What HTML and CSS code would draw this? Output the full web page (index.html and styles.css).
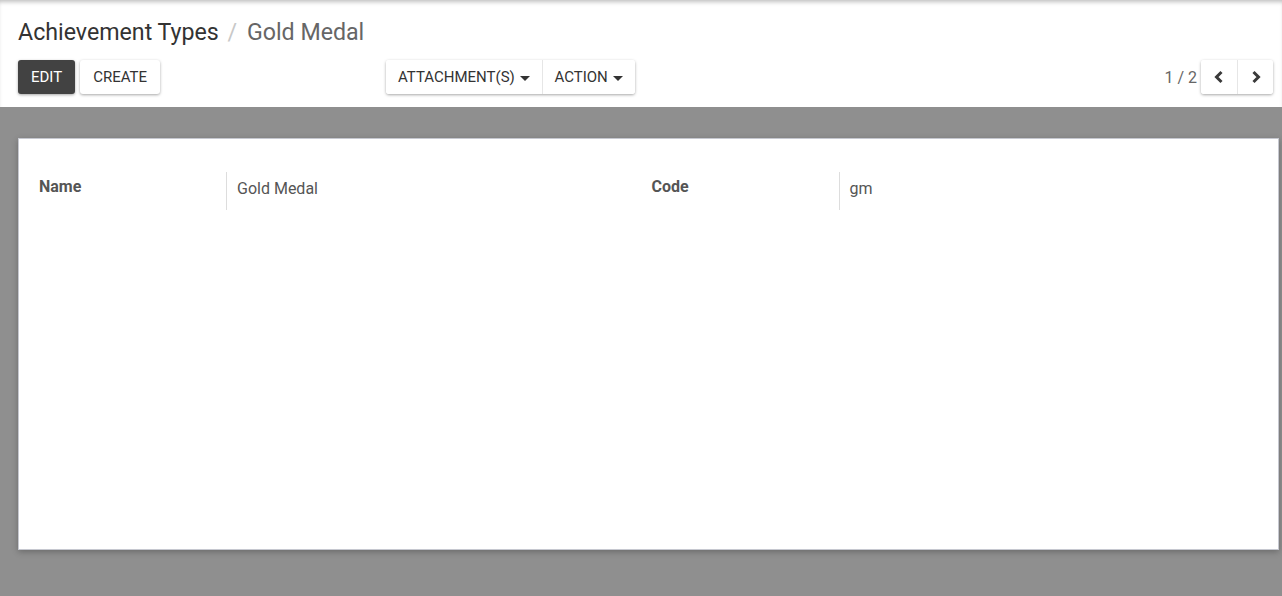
FILE: index.html
```html
<!DOCTYPE html>
<html lang="en">
<head>
    <meta charset="UTF-8">
    <title>Achievement Types / Gold Medal</title>
    <link rel="stylesheet" href="styles.css">
</head>
<body>
    <div class="control-panel">
        <div class="breadcrumb">
            <span class="crumb-link">Achievement Types</span>
            <span class="crumb-sep">/</span>
            <span class="crumb-active">Gold Medal</span>
        </div>
        <div class="toolbar">
            <div class="main-buttons">
                <button class="btn btn-primary">Edit</button>
                <button class="btn btn-secondary">Create</button>
            </div>
            <div class="btn-group sidebar-buttons">
                <button class="btn">Attachment(s) <span class="caret"></span></button>
                <button class="btn">Action <span class="caret"></span></button>
            </div>
            <div class="pager">
                <span class="pager-value">1 / 2</span>
                <div class="btn-group">
                    <button class="btn btn-icon">
                        <svg width="14" height="14" viewBox="0 0 14 14"><path d="M9.5 2 L4.5 7 L9.5 12" fill="none" stroke="#3a3a3a" stroke-width="3"/></svg>
                    </button>
                    <button class="btn btn-icon">
                        <svg width="14" height="14" viewBox="0 0 14 14"><path d="M4.5 2 L9.5 7 L4.5 12" fill="none" stroke="#3a3a3a" stroke-width="3"/></svg>
                    </button>
                </div>
            </div>
        </div>
    </div>
    <div class="form-view">
        <div class="sheet">
            <div class="field-grid">
                <div class="field">
                    <div class="field-label">Name</div>
                    <div class="field-value">Gold Medal</div>
                </div>
                <div class="field">
                    <div class="field-label">Code</div>
                    <div class="field-value">gm</div>
                </div>
            </div>
        </div>
    </div>
</body>
</html>
```

FILE: styles.css
```css
html, body {
    height: 100%;
}
body {
    margin: 0;
    font-family: Roboto, "Liberation Sans", sans-serif;
    color: #4c4c4c;
    background: #8f8f8f;
    display: flex;
    flex-direction: column;
}
.control-panel {
    background: #fff;
    padding: 16px 9px 13px 18px;
    box-shadow: inset 0 4px 4px -2px rgba(0, 0, 0, 0.25);
}
.breadcrumb {
    font-size: 23.2px;
    line-height: 32px;
    height: 32px;
    margin-bottom: 12px;
}
.crumb-link {
    color: #333;
}
.crumb-sep {
    color: #c8c8c8;
    padding: 0 4px 0 3px;
}
.crumb-active {
    color: #666;
}
.toolbar {
    display: flex;
    align-items: center;
    justify-content: space-between;
}
.btn {
    font-family: Roboto, "Liberation Sans", sans-serif;
    font-size: 15px;
    text-transform: uppercase;
    height: 34px;
    padding: 0 12px;
    border: none;
    border-radius: 3px;
    background: #fff;
    color: #333;
    box-shadow: 0 1px 3px rgba(0, 0, 0, 0.35);
    cursor: pointer;
}
.main-buttons {
    display: flex;
    gap: 5px;
    width: 368px;
}
.main-buttons .btn {
    padding: 0 13px;
}
.btn-primary {
    background: #424242;
    color: #fff;
}
.btn-group {
    display: flex;
    border-radius: 3px;
    box-shadow: 0 1px 3px rgba(0, 0, 0, 0.35);
}
.btn-group .btn {
    box-shadow: none;
    border-radius: 0;
}
.btn-group .btn + .btn {
    border-left: 1px solid #e6e6e6;
}
.btn-group .btn:first-child {
    border-radius: 3px 0 0 3px;
}
.btn-group .btn:last-child {
    border-radius: 0 3px 3px 0;
}
.caret {
    display: inline-block;
    width: 0;
    height: 0;
    margin-left: 1px;
    vertical-align: middle;
    border-top: 5px solid #333;
    border-left: 5px solid transparent;
    border-right: 5px solid transparent;
}
.sidebar-buttons {
    margin-right: auto;
}
.pager {
    display: flex;
    align-items: center;
    gap: 4px;
}
.pager-value {
    font-size: 16px;
    color: #666;
}
.btn-icon {
    width: 36px;
    padding: 0;
    display: flex;
    align-items: center;
    justify-content: center;
}
.form-view {
    flex: 1;
    padding: 31px 3px 0 18px;
}
.sheet {
    box-sizing: border-box;
    background: #fff;
    height: 412px;
    border: 1px solid #c6c8d0;
    box-shadow: 0 2px 6px rgba(0, 0, 0, 0.25);
    padding: 33px 20px 0 20px;
}
.field-grid {
    display: grid;
    grid-template-columns: 1fr 1fr;
    gap: 0 6px;
}
.field {
    display: flex;
}
.field-label {
    width: 187px;
    font-weight: bold;
    font-size: 16px;
    color: #555;
    padding-top: 5px;
}
.field-value {
    border-left: 1px solid #ddd;
    padding: 7px 10px 9px 10px;
    font-size: 16px;
    min-height: 22px;
    color: #555;
    flex: 1;
}
```
